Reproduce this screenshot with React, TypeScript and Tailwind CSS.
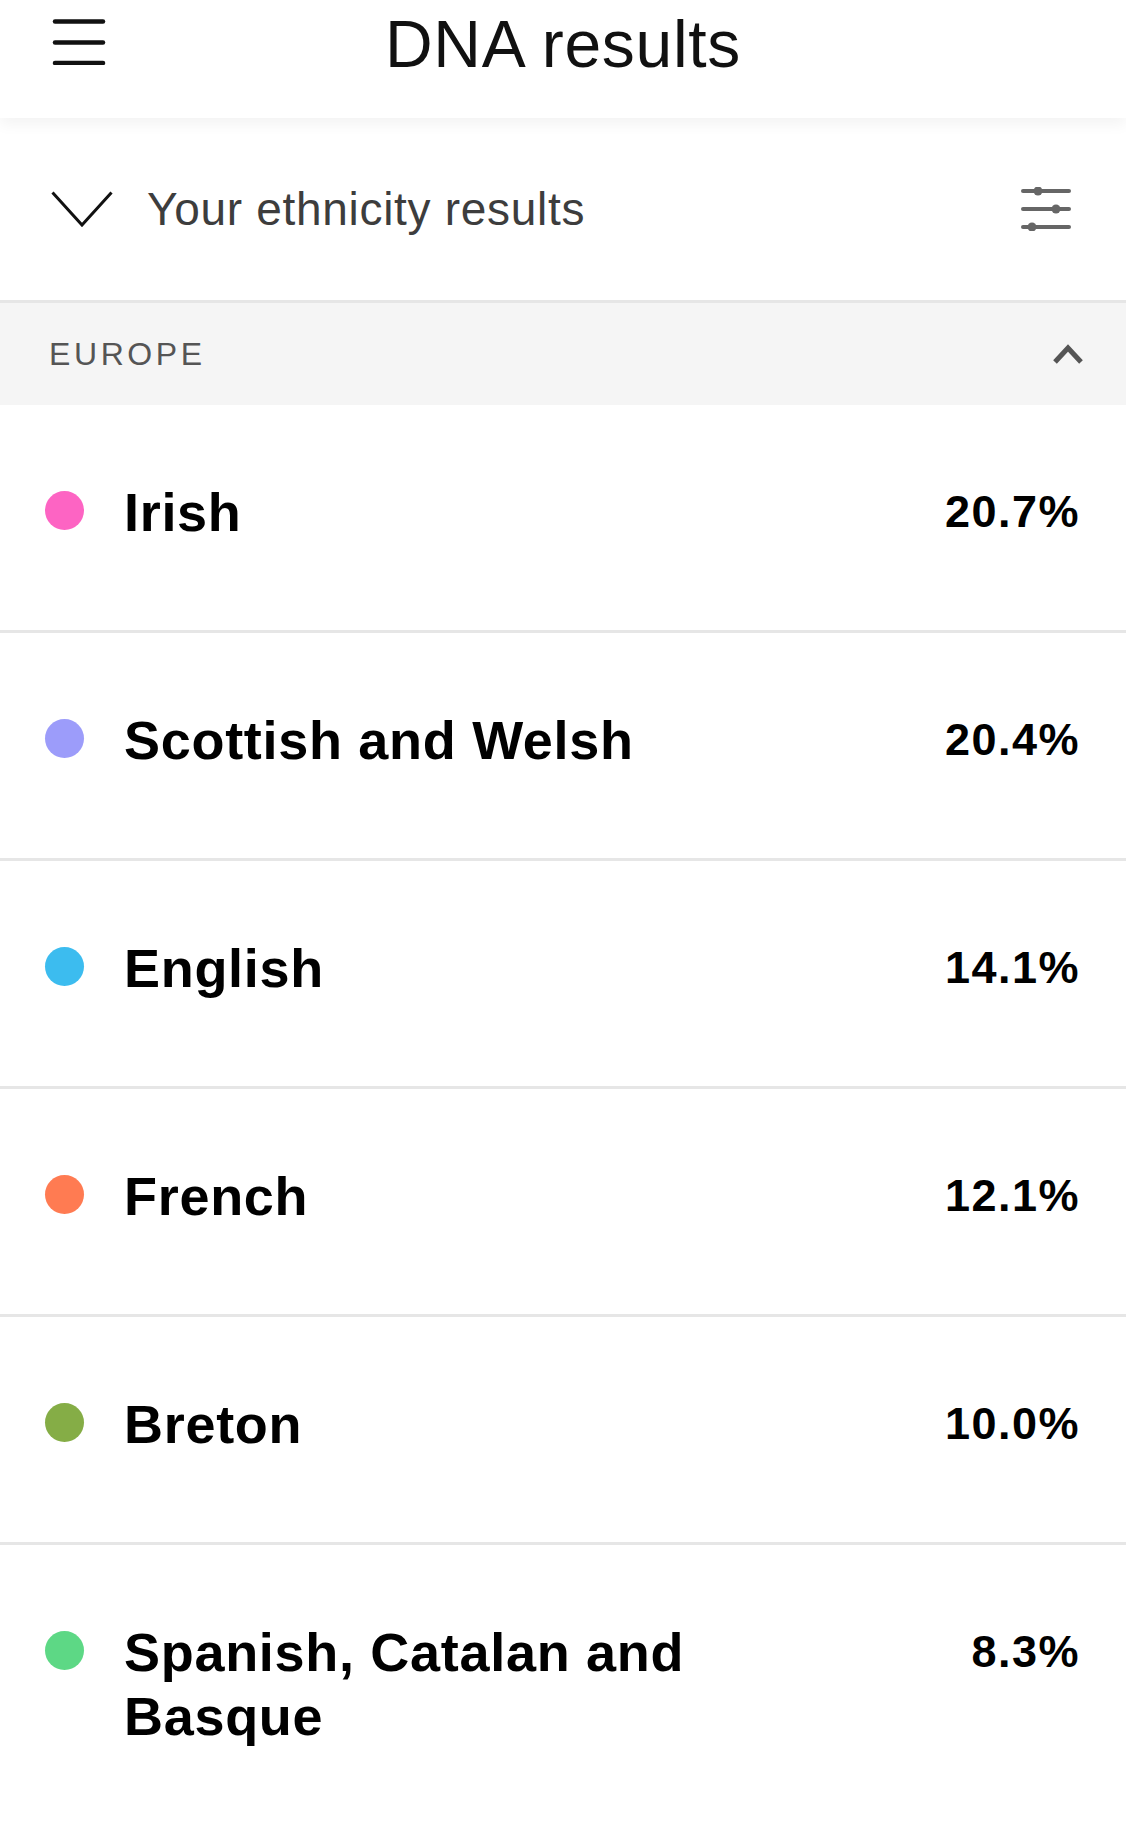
import React from "react";

const rows = [
  { name: "Irish", pct: "20.7%", color: "#fd64c3" },
  { name: "Scottish and Welsh", pct: "20.4%", color: "#9c9cfa" },
  { name: "English", pct: "14.1%", color: "#3cbcef" },
  { name: "French", pct: "12.1%", color: "#ff7b52" },
  { name: "Breton", pct: "10.0%", color: "#85ad46" },
  { name: "Spanish, Catalan and Basque", pct: "8.3%", color: "#5dd885" },
];

export default function App() {
  return (
    <div
      className="min-h-[1830px] w-full bg-white text-black"
      style={{ fontFamily: '"Liberation Sans", Arial, Helvetica, sans-serif' }}
    >
      <header className="relative z-10 grid h-[118px] grid-cols-[1fr_auto_1fr] bg-white shadow-[0_6px_14px_rgba(0,0,0,0.05)]">
        <div className="pl-[52px] pt-[19px]">
          <svg width="54" height="46" viewBox="0 0 54 46">
            <g stroke="#111" strokeWidth="4.5" strokeLinecap="round">
              <line x1="3" y1="2.5" x2="51" y2="2.5" />
              <line x1="3" y1="23.5" x2="51" y2="23.5" />
              <line x1="3" y1="44" x2="51" y2="44" />
            </g>
          </svg>
        </div>
        <h1 className="pt-[11px] text-[66px] leading-none font-normal tracking-[0.7px] text-[#111]">DNA results</h1>
        <div />
      </header>

      <div className="flex h-[185px] items-center border-b-[3px] border-[#e6e6e6] pl-[51px] pr-[54px]">
        <svg width="62" height="36" viewBox="0 0 62 36" className="shrink-0">
          <polyline points="1.5,1.5 31,34 60.5,1.5" fill="none" stroke="#111" strokeWidth="3" />
        </svg>
        <span className="ml-[34px] flex-1 text-[46px] leading-none tracking-[0.7px] text-[#3d3d3d]">Your ethnicity results</span>
        <svg width="54" height="44" viewBox="0 0 54 44" className="shrink-0">
          <g stroke="#666" strokeWidth="4" strokeLinecap="round">
            <line x1="5" y1="4" x2="51" y2="4" />
            <line x1="5" y1="22" x2="51" y2="22" />
            <line x1="5" y1="40" x2="51" y2="40" />
          </g>
          <g fill="#666">
            <circle cx="20" cy="4" r="4.5" />
            <circle cx="38" cy="22" r="4.5" />
            <circle cx="14" cy="40" r="4.5" />
          </g>
        </svg>
      </div>

      <div className="flex h-[102px] items-center justify-between bg-[#f5f5f5] pl-[49px] pr-[42px]">
        <span className="text-[32px] leading-none tracking-[3.6px] text-[#555]">EUROPE</span>
        <svg width="32" height="22" viewBox="0 0 32 22">
          <polyline points="3,19 16,5 29,19" fill="none" stroke="#555" strokeWidth="5" />
        </svg>
      </div>

      <div>
        {rows.map((r, i) => (
          <div
            key={r.name}
            className={
              i < rows.length - 1
                ? "flex items-start border-b-[3px] border-[#e6e6e6] pl-[45px] pr-[46px] pt-[75px] pb-[86px]"
                : "flex items-start pl-[45px] pr-[46px] pt-[75px] pb-[86px]"
            }
          >
            <span
              className="mt-[11px] h-[39px] w-[39px] shrink-0 rounded-full"
              style={{ backgroundColor: r.color }}
            />
            <span className="ml-[40px] max-w-[640px] flex-1 text-[54px] font-bold leading-[64px] tracking-[0.7px]">{r.name}</span>
            <span className="ml-auto shrink-0 text-[45px] font-bold leading-[64px] tracking-[1.5px]">{r.pct}</span>
          </div>
        ))}
      </div>
    </div>
  );
}
